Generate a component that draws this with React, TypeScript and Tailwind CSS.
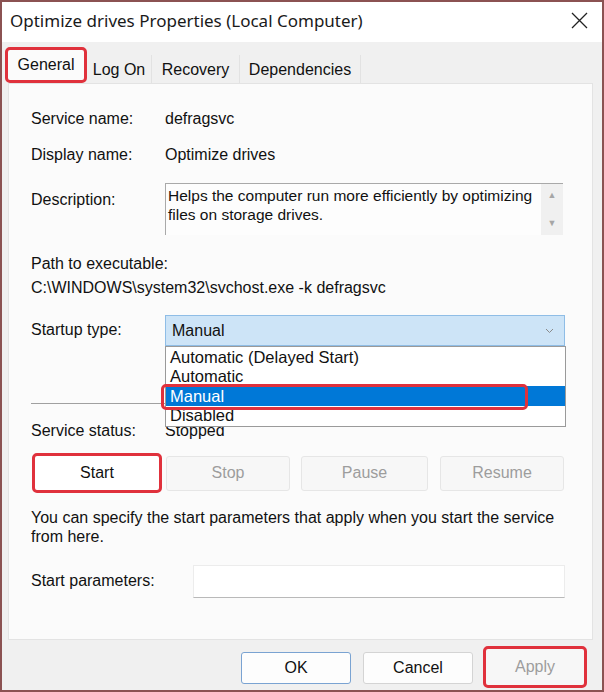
const redBox = 'border-[3px] border-[#e0313c] rounded-[5px]'

function Row({ label, value, mt }: { label: string; value: string; mt: string }) {
  return (
    <div className={`flex h-[20px] leading-[20px] ${mt}`}>
      <span className="w-[134px]">{label}</span>
      <span>{value}</span>
    </div>
  )
}

function DisabledButton({ label, w, ml }: { label: string; w: string; ml: string }) {
  return (
    <div
      className={`${w} ${ml} h-[35px] flex items-center justify-center rounded-[3px] border border-[#e6e6e6] bg-[#f7f7f7] text-[#9d9d9d]`}
    >
      {label}
    </div>
  )
}

export default function App() {
  return (
    <div className="w-[604px] h-[692px] border-2 border-[#8b5252] bg-[#f0f0f0] flex flex-col overflow-hidden font-['Liberation_Sans',Arial,sans-serif] text-[16px] text-[#111]">
      {/* title bar */}
      <div className="h-[40px] shrink-0 bg-white flex items-center justify-between pl-[8px] pr-[14px] pb-[3px]">
        <span className="font-['Noto_Sans',sans-serif] text-[17px] text-[#1a1a1a]">
          Optimize drives Properties (Local Computer)
        </span>
        <svg width="17" height="17" viewBox="0 0 17 17">
          <path d="M1 1L16 16M16 1L1 16" stroke="#222" strokeWidth="1.3" />
        </svg>
      </div>

      {/* tabs */}
      <div className="h-[41px] shrink-0 flex items-end pl-[3px]">
        <div className={`w-[82px] h-[36px] flex items-center justify-center bg-[#fbfbfb] ${redBox}`}>
          General
        </div>
        <div className="w-[65px] h-[28px] flex items-center justify-center pt-[2px] border-r border-[#e2e2e2]">
          Log On
        </div>
        <div className="w-[88px] h-[28px] flex items-center justify-center pt-[2px] border-r border-[#e2e2e2]">
          Recovery
        </div>
        <div className="w-[121px] h-[28px] flex items-center justify-center pt-[2px] border-r border-[#e2e2e2]">
          Dependencies
        </div>
      </div>

      {/* panel */}
      <div className="ml-[6px] w-[585px] h-[557px] shrink-0 bg-[#fbfbfb] border border-[#e3e3e3] pl-[22px] flex flex-col">
        <Row label="Service name:" value="defragsvc" mt="mt-[25px]" />
        <Row label="Display name:" value="Optimize drives" mt="mt-[16px]" />

        <div className="flex mt-[18px] h-[52px]">
          <span className="w-[134px] pt-[7px] leading-[20px]">Description:</span>
          <div className="w-[398px] h-[52px] flex bg-[#fdfdfd] border-t border-l border-[#a9a9a9]">
            <div className="flex-1 pl-[2px] pt-[2px] leading-[19px] text-[15.5px]">
              Helps the computer run more efficiently by optimizing files on storage drives.
            </div>
            <div className="w-[22px] bg-[#f0f0f0] flex flex-col items-center justify-between py-[5px] text-[9px] text-[#a6a6a6]">
              <span>▲</span>
              <span>▼</span>
            </div>
          </div>
        </div>

        <div className="mt-[19px] h-[20px] leading-[20px]">Path to executable:</div>
        <div className="mt-[4px] h-[20px] leading-[20px]">C:\WINDOWS\system32\svchost.exe -k defragsvc</div>

        <div className="flex mt-[17px] h-[31px]">
          <span className="w-[134px] pt-[5px] leading-[20px]">Startup type:</span>
          <div className="relative w-[400px] h-[31px]">
            <div className="h-full flex items-center justify-between pl-[6px] pr-[10px] bg-[#cde4f7] border border-[#8fbde6]">
              <span>Manual</span>
              <svg width="9" height="6" viewBox="0 0 9 6">
                <path d="M1 1L4.5 4.5L8 1" stroke="#8a8a8a" fill="none" strokeWidth="1" />
              </svg>
            </div>
            {/* open dropdown list */}
            <div className="absolute left-0 top-full w-[401px] h-[81px] pt-[1px] bg-white border border-[#9a9a9a] z-10 leading-[19px] text-[16.5px]">
              <div className="pl-[4px] h-[19px]">Automatic (Delayed Start)</div>
              <div className="pl-[4px] h-[19px]">Automatic</div>
              <div className="pl-[4px] h-[20px] leading-[20px] bg-[#0078d7] text-white">Manual</div>
              <div className="pl-[4px] h-[19px]">Disabled</div>
              <div className={`absolute left-[-5px] top-[37px] w-[367px] h-[26px] ${redBox}`} />
            </div>
          </div>
        </div>

        <div className="mt-[57px] w-[534px] h-px bg-[#a0a0a0]" />

        <Row label="Service status:" value="Stopped" mt="mt-[17px]" />

        <div className="flex items-center mt-[12px] h-[40px] ml-[1px]">
          <div className={`w-[130px] h-[40px] flex items-center justify-center bg-white ${redBox}`}>Start</div>
          <DisabledButton label="Stop" w="w-[124px]" ml="ml-[4px]" />
          <DisabledButton label="Pause" w="w-[127px]" ml="ml-[11px]" />
          <DisabledButton label="Resume" w="w-[124px]" ml="ml-[12px]" />
        </div>

        <div className="mt-[15px] leading-[19px] w-[540px]">
          You can specify the start parameters that apply when you start the service from here.
        </div>

        <div className="flex mt-[19px] h-[33px]">
          <span className="w-[162px] pt-[6px] leading-[20px]">Start parameters:</span>
          <div className="w-[372px] h-[33px] bg-white border border-[#ececec] border-b-[#b9b9b9]" />
        </div>
      </div>

      {/* bottom buttons */}
      <div className="flex items-start pl-[239px] pt-[6px]">
        <div className="mt-[6px] w-[110px] h-[32px] flex items-center justify-center bg-[#fdfdfd] border border-[#7aa3d2] rounded-[3px]">
          OK
        </div>
        <div className="mt-[6px] ml-[12px] w-[110px] h-[32px] flex items-center justify-center bg-[#fdfdfd] border border-[#d4d4d4] rounded-[3px]">
          Cancel
        </div>
        <div className={`ml-[10px] w-[104px] h-[42px] flex items-center justify-center bg-[#f7f7f7] text-[#9d9d9d] ${redBox}`}>
          Apply
        </div>
      </div>
    </div>
  )
}
